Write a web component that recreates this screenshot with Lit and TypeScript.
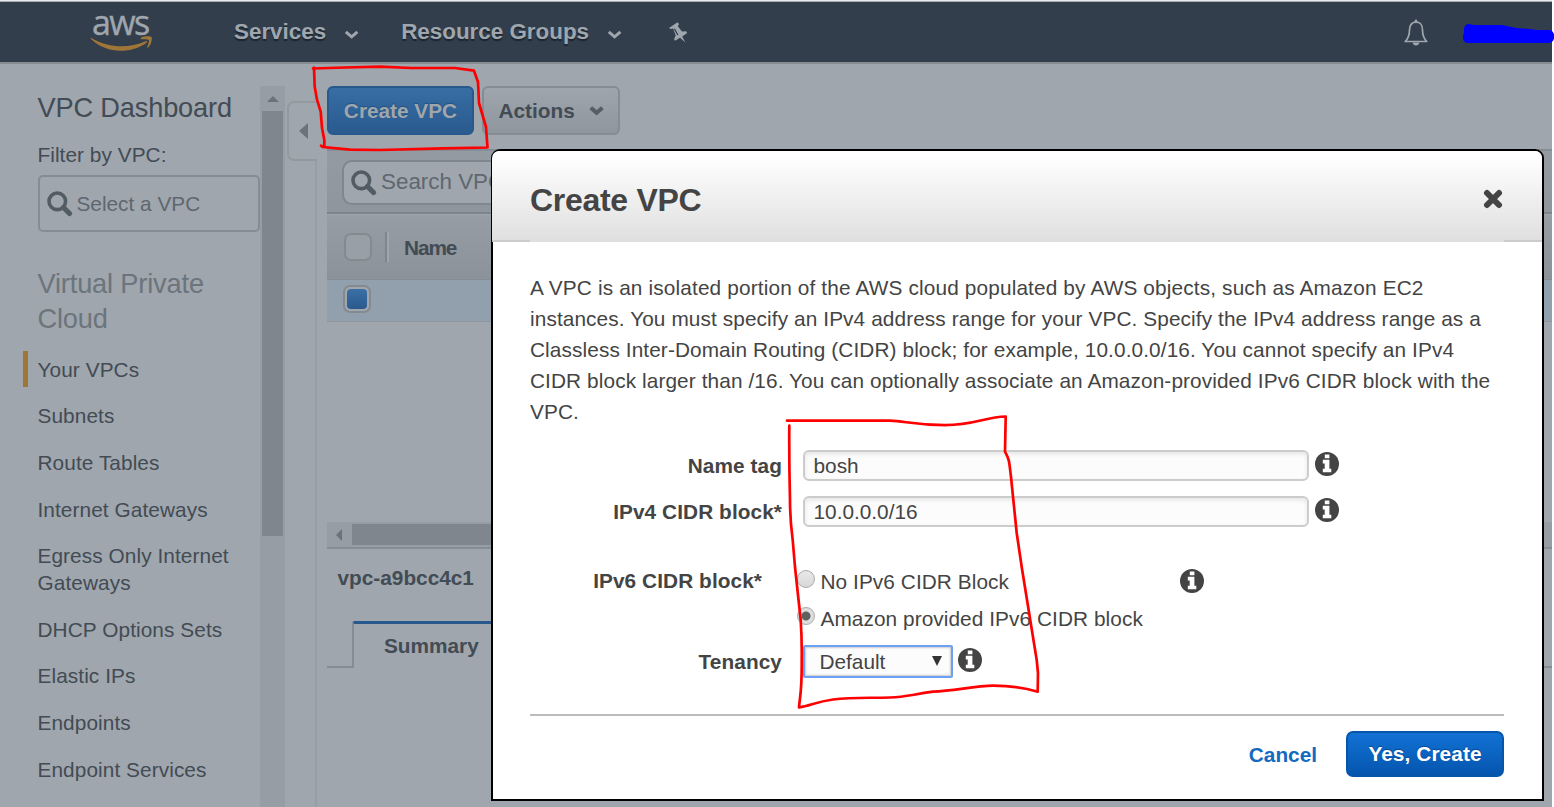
import { LitElement, html, css, svg } from "lit";
import { customElement } from "lit/decorators.js";
import { classMap } from "lit/directives/class-map.js";

const NAV_ITEMS = [
  "Your VPCs",
  "Subnets",
  "Route Tables",
  "Internet Gateways",
  "Egress Only Internet Gateways",
  "DHCP Options Sets",
  "Elastic IPs",
  "Endpoints",
  "Endpoint Services",
];

const infoIcon = html`<svg class="info" width="24" height="24" viewBox="0 0 24 24">
  <circle cx="12" cy="12" r="12" fill="#444" />
  <path fill="#fff" d="M9.800 2.400h4.600v3.800H9.800zM7.800 7.800h6.600v9h1.900v3.400H7.800v-3.400h1.900v-5.400H7.800z" />
</svg>`;

const searchIcon = html`<svg class="search-icon" width="26" height="26" viewBox="0 0 26 26">
  <circle cx="10.300" cy="10.300" r="8.300" fill="none" stroke="#535b63" stroke-width="3.600" />
  <path d="M16.500 16.500l6 6" stroke="#535b63" stroke-width="5.200" stroke-linecap="round" />
</svg>`;

const chevron = (color: string, weight = 3) => html`<svg width="16" height="10" viewBox="0 0 16 10">
  <path d="M1.800 1.800l5.800 5 5.800-5" fill="none" stroke="${color}" stroke-width="${weight}" />
</svg>`;

@customElement("console-header")
class ConsoleHeader extends LitElement {
  static styles = css`
    :host {
      display: flex;
      box-sizing: border-box;
      height: 64px;
      width: 1552px;
      border-top: 1px solid #e9eaeb;
      border-bottom: 2px solid #858d93;
      background: #323e4c;
      box-shadow: inset 0 1px #a8adb2;
      color: #9fa6ad;
      font: bold 22.4px/26px "Liberation Sans", Arial, sans-serif;
    }
    .logo {
      display: flex;
      flex-direction: column;
      width: 64px;
      margin-left: 90px;
      margin-right: 80px;
    }
    .word {
      font: 500 34px/48px "Open Sans", sans-serif;
      letter-spacing: -1.6px;
      -webkit-text-stroke: 0.4px #9fa6ad;
      margin: -3px 0 -10px 2px;
    }
    .menu {
      display: flex;
      align-items: center;
      height: 61px;
      text-shadow: 0 2px 1px #1c252f;
      white-space: nowrap;
    }
    .menu svg {
      margin: 6px 0 0 18px;
    }
    .groups {
      margin-left: 41px;
    }
    .pin {
      margin: 20px 0 0 45px;
    }
    .bell {
      margin: 18px 0 0 auto;
    }
    .account {
      margin: 22px -2px 0 34px;
      flex: none;
    }
  `;
  render() {
    return html`
      <div class="logo">
        <span class="word">aws</span>
        <svg width="64" height="16" viewBox="0 0 64 16">
          <path fill="#a07638" d="M1.200 1.900C19 12 38 12.800 55.600 5.200c1.200-.5 1.900.7.9 1.500C40 18.500 16 17.500 1 3c-.6-.6-.3-1.300.2-1.100z" />
          <path fill="#a07638" d="M51 1.800C54.500-.4 60.800 0 61.500 1c.8 1.200.1 7.400-3.400 10.400-.6.500-1.200.2-.9-.5.9-2.200 2.200-5.900 1.600-6.900C58.100 3 54 3.100 51.700 3.300 50.700 3.400 50.300 2.300 51 1.800z" />
        </svg>
      </div>
      <div class="menu"><span>Services</span>${chevron("#9fa6ad")}</div>
      <div class="menu groups"><span>Resource Groups</span>${chevron("#9fa6ad")}</div>
      <svg class="pin" width="22" height="24" viewBox="0 0 22 24">
        <path fill="#9fa6ad" d="M1 7L9.500 1.200l1.500 2-1.200 2 4.200 5.300 4.200-.3 1 1.900-5 3.300 3.200 6-5.400-4.600-5 3-.9-1.700 1.600-3.600-2.600-7-2.700.5z" />
        <path d="M6.400 7.800l3.400 6.200" stroke="#323e4c" stroke-width="1.300" />
      </svg>
      <svg class="bell" width="26" height="28" viewBox="0 0 26 28" fill="none" stroke="#9fa6ad" stroke-width="1.700">
        <path d="M2.200 22.500c3-3 4.300-5.500 4.300-11.500 0-5 2.700-8 6.500-8s6.500 3 6.500 8c0 6 1.300 8.500 4.300 11.500z" stroke-linejoin="round" />
        <path d="M13 3V1.800" stroke-linecap="round" stroke-width="2.400" />
        <path d="M9.600 23.600h6.800c-.3 2-1.600 3-3.400 3s-3.100-1-3.400-3z" fill="#9fa6ad" stroke="none" />
      </svg>
      <svg class="account" width="91" height="22" viewBox="0 0 91 22">
        <path fill="#00f" d="M1 7C1 3 3 1 6 1c2 0 3 1 5 1h28l14 3 14 1 6 1h13c7 0 7 13 0 13H6c-7 0-7-7-5-10z" />
      </svg>
    `;
  }
}

@customElement("console-sidebar")
class ConsoleSidebar extends LitElement {
  static styles = css`
    :host {
      display: block;
      box-sizing: border-box;
      width: 260px;
      height: 743px;
      overflow: hidden;
      padding-top: 26px;
      color: #434b54;
      font: 20.8px/27px "Liberation Sans", Arial, sans-serif;
    }
    .title,
    .section {
      margin-left: 37.5px;
      font-size: 27.2px;
      line-height: 35px;
      letter-spacing: -0.16px;
    }
    .section {
      margin-top: 34px;
      color: #6c747c;
    }
    .label {
      margin: 16px 0 7px 37.5px;
      letter-spacing: 0.05px;
    }
    .picker {
      display: flex;
      align-items: center;
      box-sizing: border-box;
      width: 222px;
      height: 57px;
      margin-left: 38px;
      padding-left: 7px;
      border: 2px solid #858d94;
      border-radius: 5px;
      color: #5f6770;
    }
    .search-icon {
      margin: 1px 3.5px 0 0;
    }
    .nav {
      margin-top: 10px;
      letter-spacing: 0.08px;
    }
    .item {
      display: flex;
      align-items: center;
      padding: 9.8px 20px 9.8px 23px;
    }
    .bar {
      flex: none;
      width: 5px;
      height: 36px;
      margin: -5px 9.5px -5px 0;
    }
    .active .bar {
      background: #a07638;
    }
  `;
  render() {
    return html`
      <div class="title">VPC Dashboard</div>
      <div class="label">Filter by VPC:</div>
      <div class="picker">${searchIcon}<span>Select a VPC</span></div>
      <div class="section">Virtual Private<br />Cloud</div>
      <div class="nav">
        ${NAV_ITEMS.map(
          (name, i) => html`<div class=${classMap({ item: true, active: i === 0 })}>
            <span class="bar"></span><span>${name}</span>
          </div>`
        )}
      </div>
    `;
  }
}

@customElement("vpc-list")
class VpcList extends LitElement {
  static styles = css`
    :host {
      display: flex;
      flex-direction: column;
      width: 1225px;
      height: 743px;
      color: #434b54;
      font: bold 20.8px/27px "Liberation Sans", Arial, sans-serif;
    }
    .toolbar {
      display: flex;
      gap: 8px;
      box-sizing: border-box;
      height: 87px;
      padding-top: 22px;
      border-bottom: 2px solid #858d94;
    }
    .btn {
      display: flex;
      align-items: center;
      box-sizing: border-box;
      height: 49px;
      border-radius: 6px;
      white-space: nowrap;
    }
    .create {
      width: 147px;
      justify-content: center;
      color: #9fa6ad;
      background: linear-gradient(#376ea4, #2a5a8e);
      border: 2px solid #28598d;
      text-shadow: 0 -1px 1px #23507f;
    }
    .actions {
      width: 138px;
      padding-left: 14.5px;
      gap: 14px;
      border: 2px solid #858d94;
      background: linear-gradient(#9ea5ac, #8f969d);
    }
    .filter {
      display: flex;
      align-items: center;
      box-sizing: border-box;
      height: 63px;
      padding-left: 15px;
      border-bottom: 2px solid #7d858c;
      background: linear-gradient(#949ba2, #8e959c);
    }
    .search {
      display: flex;
      align-items: center;
      box-sizing: border-box;
      width: 500px;
      height: 45px;
      margin-top: 1px;
      padding-left: 7px;
      border: 2px solid #7f878e;
      border-radius: 10px;
      background: #9fa6ad;
      color: #5f6770;
      font-weight: normal;
      font-size: 22.4px;
      line-height: 26px;
    }
    .search span {
      margin-top: -1px;
    }
    .search-icon {
      margin: 1px 4px 0 0;
    }
    .head {
      display: flex;
      align-items: center;
      box-sizing: border-box;
      height: 66px;
      padding-left: 17px;
      border-top: 1px solid #9fa6ad;
      border-bottom: 1px solid #858d94;
      background: linear-gradient(#969da4, #8b9299);
      letter-spacing: -1.1px;
    }
    .check {
      box-sizing: border-box;
      width: 28px;
      height: 28px;
      border: 2px solid #838b91;
      border-radius: 7px;
      background: #989fa6;
    }
    .rule {
      width: 2px;
      height: 30px;
      margin: 0 15px 0 13px;
      border-right: 2px solid #9fa6ad;
      background: #7f878e;
    }
    .row {
      display: flex;
      align-items: center;
      box-sizing: border-box;
      height: 42px;
      padding: 0 0 3px 16px;
      border-bottom: 1px solid #8c959e;
      background: #929fac;
    }
    .checked {
      display: flex;
      padding: 2px;
      background: #9fa6ad;
    }
    .mark {
      flex: 1;
      border-radius: 4px;
      background: linear-gradient(#3a70a6, #2a5a8e);
    }
    .body {
      flex: 1;
    }
    .hscroll {
      display: flex;
      align-items: center;
      box-sizing: border-box;
      height: 27px;
      border-bottom: 2px solid #858d94;
      background: #969da4;
    }
    .hscroll svg {
      margin: 0 10px 0 9px;
    }
    .thumb {
      width: 800px;
      height: 21px;
      background: #7f868d;
    }
    .details {
      height: 72px;
      padding: 0 10.5px;
      line-height: 58px;
      box-sizing: border-box;
    }
    .tabs {
      display: flex;
      height: 47px;
    }
    .edge {
      box-sizing: border-box;
      width: 25px;
      border-bottom: 2px solid #858d94;
    }
    .rest {
      box-sizing: border-box;
      flex: 1;
      border-bottom: 2px solid #858d94;
    }
    .tab {
      box-sizing: border-box;
      width: 157px;
      padding: 8px 0 0 30px;
      border: 2px solid #858d94;
      border-top: 3px solid #28598d;
      border-bottom: 0;
      border-radius: 3px 3px 0 0;
    }
    .panel {
      height: 139px;
    }
  `;
  render() {
    return html`
      <div class="toolbar">
        <div class="btn create">Create VPC</div>
        <div class="btn actions"><span>Actions</span>${chevron("#555d65", 4)}</div>
      </div>
      <div class="filter">
        <div class="search">${searchIcon}<span>Search VPCs</span></div>
      </div>
      <div class="head"><span class="check"></span><span class="rule"></span><span>Name</span></div>
      <div class="row"><span class="check checked"><span class="mark"></span></span></div>
      <div class="body"></div>
      <div class="hscroll">
        <svg width="6" height="12" viewBox="0 0 6 12"><path d="M6 0v12L0 6z" fill="#6b737a" /></svg>
        <div class="thumb"></div>
      </div>
      <div class="details">vpc-a9bcc4c1</div>
      <div class="tabs"><div class="edge"></div><div class="tab">Summary</div><div class="rest"></div></div>
      <div class="panel"></div>
    `;
  }
}

@customElement("create-dialog")
class CreateDialog extends LitElement {
  static styles = css`
    :host {
      display: flex;
      flex-direction: column;
      box-sizing: border-box;
      width: 1053px;
      height: 652px;
      border: 2px solid #000;
      border-radius: 9px 9px 0 0;
      background: #fff;
      color: #444;
      font: 20.8px/31px "Liberation Sans", Arial, sans-serif;
    }
    .head {
      display: flex;
      justify-content: space-between;
      align-items: center;
      box-sizing: border-box;
      height: 91px;
      margin-left: -1px;
      padding: 7px 39px 0 38px;
      border-radius: 7px 7px 0 0;
      background:
        linear-gradient(#ccc, #ccc) left bottom / 38px 2px no-repeat,
        linear-gradient(#ccc, #ccc) right bottom / 38px 2px no-repeat,
        linear-gradient(#fff 5%, #dfdfdf);
      font-size: 32px;
      font-weight: bold;
      letter-spacing: -0.3px;
    }
    .head svg {
      margin-top: -2px;
    }
    .content {
      padding: 30px 38px 0 37px;
    }
    .intro {
      white-space: nowrap;
      height: 155px;
      letter-spacing: 0.1px;
    }
    .lead {
      letter-spacing: 0.145px;
    }
    .field {
      display: flex;
      align-items: center;
      height: 31px;
      margin-top: 15px;
    }
    .first {
      margin-top: 23px;
    }
    .label {
      width: 252px;
      margin-right: 21px;
      text-align: right;
      font-weight: bold;
      letter-spacing: 0.08px;
    }
    .input {
      box-sizing: border-box;
      width: 506px;
      height: 31px;
      padding-left: 8.5px;
      line-height: 28px;
      border: 2px solid #ccc;
      border-radius: 6px;
      background: #fcfcfc;
      box-shadow: inset 0 2px 4px #e4e4e4;
    }
    .info {
      margin: -3px 0 0 6px;
    }
    .choices {
      display: flex;
      height: 74px;
      margin-top: 38px;
    }
    .choices .label {
      width: 232px;
      margin-right: 34.5px;
    }
    .options {
      width: 383px;
      letter-spacing: 0.07px;
    }
    .option {
      display: flex;
      align-items: center;
      height: 37px;
      gap: 6px;
      margin-top: -2px;
    }
    .option + .option {
      margin-top: 0;
    }
    .radio {
      box-sizing: border-box;
      width: 18px;
      height: 18px;
      margin-top: -5px;
      border: 1px solid #aaa;
      border-radius: 50%;
      background: linear-gradient(#e8e8e8, #d8d8d8);
    }
    .on {
      background: radial-gradient(circle, #606060 4px, #dedede 5px);
    }
    .choices .info {
      margin: 4px 0 0;
    }
    .tenancy {
      margin-top: 7px;
    }
    .select {
      display: flex;
      justify-content: space-between;
      box-sizing: border-box;
      width: 150px;
      height: 33px;
      padding: 0 9px 0 14.5px;
      line-height: 29px;
      border: 2px solid #6ca0f4;
      border-radius: 2px;
      background: #fcfcfc;
      box-shadow: inset 0 0 2px 1px #ccc;
    }
    .select svg {
      margin-top: 9px;
    }
    .tenancy .info {
      margin-left: 5px;
    }
    .foot {
      display: flex;
      justify-content: flex-end;
      align-items: center;
      margin: 37px 38px 0 37px;
      padding-top: 15px;
      border-top: 2px solid #bbb;
      gap: 29px;
      font-weight: bold;
    }
    .cancel {
      color: #146abf;
    }
    .submit {
      box-sizing: border-box;
      width: 158px;
      height: 46px;
      border: 2px solid #0755ab;
      border-radius: 7px;
      background: linear-gradient(#1172d4, #0555ae);
      color: #fff;
      line-height: 42px;
      text-align: center;
      letter-spacing: 0.1px;
      text-shadow: 0 -1px 1px #064a96;
    }
  `;
  render() {
    return html`
      <div class="head">
        <span>Create VPC</span>
        <svg width="20" height="20" viewBox="0 0 20 20">
          <path d="M4 4l12 12M16 4L4 16" stroke="#444" stroke-width="6" stroke-linecap="round" />
        </svg>
      </div>
      <div class="content">
        <div class="intro">
          <span class="lead">A VPC is an isolated portion of the AWS cloud populated by AWS objects, such as Amazon EC2</span><br />
          instances. You must specify an IPv4 address range for your VPC. Specify the IPv4 address range as a<br />
          Classless Inter-Domain Routing (CIDR) block; for example, 10.0.0.0/16. You cannot specify an IPv4<br />
          CIDR block larger than /16. You can optionally associate an Amazon-provided IPv6 CIDR block with the<br />
          VPC.
        </div>
        <div class="field first"><span class="label">Name tag</span><div class="input">bosh</div>${infoIcon}</div>
        <div class="field"><span class="label">IPv4 CIDR block*</span><div class="input">10.0.0.0/16</div>${infoIcon}</div>
        <div class="choices">
          <span class="label">IPv6 CIDR block*</span>
          <div class="options">
            <div class="option"><span class="radio"></span><span>No IPv6 CIDR Block</span></div>
            <div class="option"><span class="radio on"></span><span>Amazon provided IPv6 CIDR block</span></div>
          </div>
          ${infoIcon}
        </div>
        <div class="field tenancy">
          <span class="label">Tenancy</span>
          <div class="select">
            <span>Default</span>
            <svg width="10" height="10" viewBox="0 0 10 10"><path d="M0 0h10L5 10z" fill="#333" /></svg>
          </div>
          ${infoIcon}
        </div>
      </div>
      <div class="foot"><span class="cancel">Cancel</span><div class="submit">Yes, Create</div></div>
    `;
  }
}

const MARKS = [
  "M313 68.500L345 67.500L380 66.700L411 68L455 68L474 70.700L478 82L479 103L486 127L487.500 147.500L443 148.300L380 150L350 149.700L323 147L321 145.700",
  "M314 67.700L314.700 86.700Q316 99 320.700 111.700L322 128L324.300 140L324.300 146",
  "M787 420.700H890C905 421 912 424.700 945 425.200C975 425 985 417 1005.700 416.500L1005 451.700C1010 461 1009 462 1011 477L1016.700 533L1021.700 567L1036.700 660L1038 673L1037.700 691.700C1022 687 1008 685.700 993 685.700C975 686 955 690.500 933 691.700C910 695 905 697 890 697.500C870 698.200 853 697 833 699.500C815 702 810 706 799 707.300C800 695 802 692 801.700 660Q802 640 800.700 620L795 567L792.700 540Q790 520 790 500Q789 460 789.300 425.500",
];

@customElement("app-root")
class AppRoot extends LitElement {
  static styles = css`
    :host {
      display: block;
      position: relative;
      width: 1554px;
      height: 807px;
      overflow: hidden;
      background: #fff;
    }
    .main {
      display: flex;
      width: 1552px;
      height: 743px;
      background: #9fa6ad;
    }
    .vscroll {
      display: flex;
      flex-direction: column;
      align-items: center;
      width: 25px;
      height: 721px;
      margin-top: 22px;
      background: #969da4;
    }
    .up {
      margin: 10px 0 9px;
    }
    .thumb {
      width: 21px;
      height: 425px;
      background: #7f868d;
    }
    .splitter {
      box-sizing: border-box;
      width: 32px;
      margin: 0 10px 0 0;
      padding: 37px 0 0 2px;
    }
    .handle {
      display: flex;
      align-items: center;
      box-sizing: border-box;
      width: 30px;
      height: 60px;
      padding-left: 10px;
      border: 2px solid #92999f;
      border-right: 0;
      border-radius: 7px 0 0 7px;
    }
    .line {
      width: 2px;
      height: 646px;
      margin-left: 28px;
      background: #979ea5;
    }
    .dialog {
      position: absolute;
      left: 491px;
      top: 149px;
    }
    .marks {
      position: absolute;
      left: 0;
      top: 0;
    }
  `;
  render() {
    return html`
      <console-header></console-header>
      <div class="main">
        <console-sidebar></console-sidebar>
        <div class="vscroll">
          <svg class="up" width="12" height="6" viewBox="0 0 12 6"><path d="M0 6h12L6 0z" fill="#6b737a" /></svg>
          <div class="thumb"></div>
        </div>
        <div class="splitter">
          <div class="handle">
            <svg width="9" height="16" viewBox="0 0 9 16"><path d="M9 0v16L0 8z" fill="#6b737a" /></svg>
          </div>
          <div class="line"></div>
        </div>
        <vpc-list></vpc-list>
      </div>
      <create-dialog class="dialog"></create-dialog>
      <svg class="marks" width="1554" height="807" viewBox="0 0 1554 807" fill="none" stroke="#f00" stroke-width="2.700" stroke-linecap="round" stroke-linejoin="round">
        ${MARKS.map((d) => svg`<path d=${d} />`)}
      </svg>
    `;
  }
}
